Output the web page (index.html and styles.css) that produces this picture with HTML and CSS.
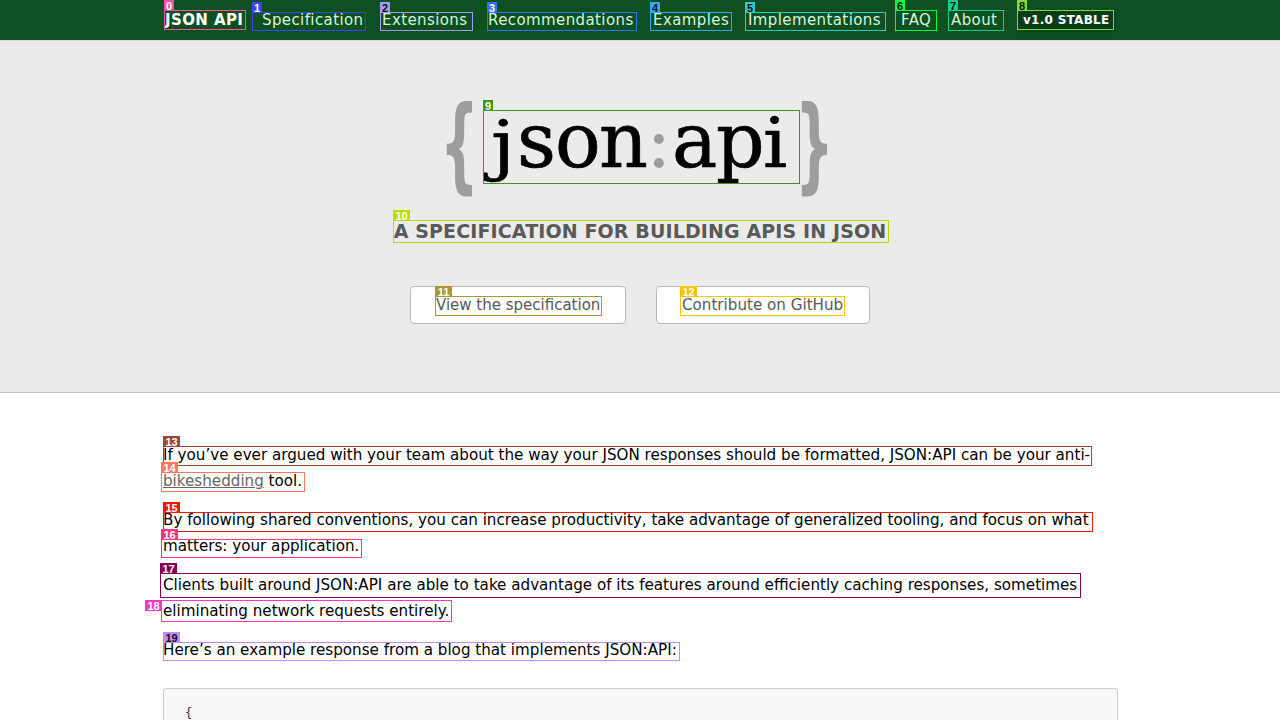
FILE: index.html
```html
<!DOCTYPE html>
<html lang="en">
<head>
<meta charset="utf-8">
<title>JSON:API</title>
<link rel="stylesheet" href="styles.css">
</head>
<body>
<header class="navbar">
  <nav class="nav">
    <a class="brand">JSON API</a><a>Specification</a><a>Extensions</a><a>Recommendations</a><a>Examples</a><a>Implementations</a><a>FAQ</a><a>About</a><a class="version">v1.0 STABLE</a>
  </nav>
</header>
<section class="hero">
  <svg class="logo" width="400" height="120" viewBox="440 90 400 120" role="img" aria-label="json:api">
    <text class="brace" transform="translate(440 179) scale(.53 1)">{</text>
    <g class="word">
      <text transform="translate(491 166) scale(1.03 .87)">j</text><text x="517" y="166">s</text><text x="555" y="166">o</text><text x="599" y="166">n</text>
      <text class="colon" x="646" y="166">:</text>
      <text x="672" y="166">a</text><text x="716" y="166">p</text><text transform="translate(763 166) scale(1 .9)">i</text>
    </g>
    <text class="brace" transform="translate(795 179) scale(.53 1)">}</text>
  </svg>
  <h1 class="tagline">A SPECIFICATION FOR BUILDING APIS IN JSON</h1>
  <div class="actions">
    <a class="button view">View the specification</a>
    <a class="button github">Contribute on GitHub</a>
  </div>
</section>
<main class="content">
  <p>If you’ve ever argued with your team about the way your JSON responses should be formatted, JSON:API can be your anti-<br><a class="link">bikeshedding</a> tool.</p>
  <p>By following shared conventions, you can increase productivity, take advantage of generalized tooling, and focus on what<br>matters: your application.</p>
  <p>Clients built around JSON:API are able to take advantage of its features around efficiently caching responses, sometimes<br>eliminating network requests entirely.</p>
  <p>Here’s an example response from a blog that implements JSON:API:</p>
  <pre class="code">{</pre>
</main>
<div class="marks">
  <div class="mark m0"><b>0</b></div>
  <div class="mark m1"><b>1</b></div>
  <div class="mark m2 dark"><b>2</b></div>
  <div class="mark m3"><b>3</b></div>
  <div class="mark m4 dark"><b>4</b></div>
  <div class="mark m5 dark"><b>5</b></div>
  <div class="mark m6 dark"><b>6</b></div>
  <div class="mark m7 dark"><b>7</b></div>
  <div class="mark m8 dark"><b>8</b></div>
  <div class="mark m9"><b>9</b></div>
  <div class="mark m10 wide"><b>10</b></div>
  <div class="mark m11 wide"><b>11</b></div>
  <div class="mark m12 wide"><b>12</b></div>
  <div class="mark m13 wide"><b>13</b></div>
  <div class="mark m14 wide"><b>14</b></div>
  <div class="mark m15 wide"><b>15</b></div>
  <div class="mark m16 wide"><b>16</b></div>
  <div class="mark m17 wide"><b>17</b></div>
  <div class="mark m18 wide"><b>18</b></div>
  <div class="mark m19 wide dark"><b>19</b></div>
</div>
</body>
</html>
```

FILE: styles.css
```css
* { box-sizing: border-box; }
html, body { height: 720px; overflow: hidden; }
body { margin: 0; position: relative; background: #fff; color: #000; font: 15px/26px "DejaVu Sans", sans-serif; }
.navbar { height: 40px; background: #0e5022; }
.nav { display: grid; grid-template-columns: 97px 120px 106px 165px 95px 153px 50px 67px 96px; padding-left: 165px; height: 40px; line-height: 40px; color: #d4f5d8; white-space: nowrap; letter-spacing: .4px; }
.brand { color: #fff; font-weight: bold; }
.version { align-self: start; margin-top: 10px; height: 20px; line-height: 20px; padding-left: 5px; font-size: 12px; font-weight: bold; letter-spacing: .28px; color: #fff; background: #093d1a; border-radius: 3px; box-shadow: 1px 1px 3px #083a19; }
.hero { height: 353px; padding-top: 50px; display: flex; flex-direction: column; align-items: center; background: #ebebeb; border-top: 1px solid #d5ded7; border-bottom: 1px solid #c4c4c4; }
.logo { display: block; flex: none; overflow: visible; }
.brace { font: bold 103px "DejaVu Sans", sans-serif; fill: #9d9d9d; }
.word { font: 76px "DejaVu Serif", serif; fill: #000; stroke: #000; stroke-width: .7px; stroke-linejoin: round; }
.colon { fill: #9d9d9d; stroke: none; }
.tagline { margin: 7px 0 0; font-size: 19px; line-height: 26px; font-weight: bold; letter-spacing: .12px; color: #595959; white-space: nowrap; }
.actions { display: flex; gap: 30px; margin-top: 42px; }
.button { display: block; height: 38px; line-height: 36px; border: 1px solid #b9b9b9; border-radius: 4px; background: #fff; color: #595959; padding-left: 25px; white-space: nowrap; }
.view { width: 216px; }
.github { width: 214px; font-size: 15.15px; }
.content { margin-left: 163px; width: 955px; padding-top: 49px; }
.content p { margin: 0 0 13px; white-space: nowrap; font-size: 15.15px; }
.link { color: #666; text-decoration: underline; }
.code { margin: 25px 0 0; height: 32px; padding: 12px 21px 0; border: 1px solid #ccc; border-bottom: 0; border-radius: 4px 4px 0 0; background: #f8f8f8; color: #333; font: 12px/24px "DejaVu Sans Mono", monospace; overflow: hidden; }
.mark { position: absolute; border: 1px solid var(--c); }
.mark b { position: absolute; left: -1px; top: -11px; width: 10px; height: 11px; background: var(--c); color: #fff; font: bold 11px/12px "Liberation Sans", sans-serif; text-align: center; }
.wide b { width: 17px; }
.dark b { color: #111; }
.m0 { left: 164px; top: 10px; width: 82px; height: 20px; --c: #ff4fa3; }
.m1 { left: 252px; top: 12px; width: 114px; height: 19px; --c: #4040ff; }
.m2 { left: 380px; top: 12px; width: 93px; height: 19px; --c: #a09bff; }
.m3 { left: 487px; top: 12px; width: 150px; height: 19px; --c: #3070ff; }
.m4 { left: 650px; top: 12px; width: 82px; height: 19px; --c: #30a8ff; }
.m5 { left: 745px; top: 12px; width: 141px; height: 19px; --c: #30c9c9; }
.m6 { left: 895px; top: 10px; width: 42px; height: 21px; --c: #10f848; }
.m7 { left: 948px; top: 10px; width: 56px; height: 21px; --c: #18cc90; }
.m8 { left: 1017px; top: 10px; width: 97px; height: 20px; --c: #85d835; }
.m9 { left: 483px; top: 110px; width: 317px; height: 74px; --c: #3b9917; }
.m10 { left: 393px; top: 220px; width: 496px; height: 23px; --c: #bedb00; }
.m11 { left: 435px; top: 296px; width: 167px; height: 20px; --c: #a99a2d; }
.m12 { left: 680px; top: 296px; width: 165px; height: 20px; --c: #ffc400; }
.m13 { left: 163px; top: 446px; width: 929px; height: 20px; --c: #994735; }
.m14 { left: 161px; top: 472px; width: 144px; height: 20px; --c: #ff7566; }
.m15 { left: 163px; top: 512px; width: 930px; height: 20px; --c: #f31800; }
.m16 { left: 161px; top: 539px; width: 201px; height: 19px; --c: #fa3582; }
.m17 { left: 160px; top: 573px; width: 921px; height: 25px; --c: #850054; }
.m18 { left: 161px; top: 600px; width: 291px; height: 22px; --c: #f936cc; }
.m18 b { left: -17px; top: -1px; }
.m19 { left: 163px; top: 642px; width: 517px; height: 19px; --c: #bf8cff; }
```
